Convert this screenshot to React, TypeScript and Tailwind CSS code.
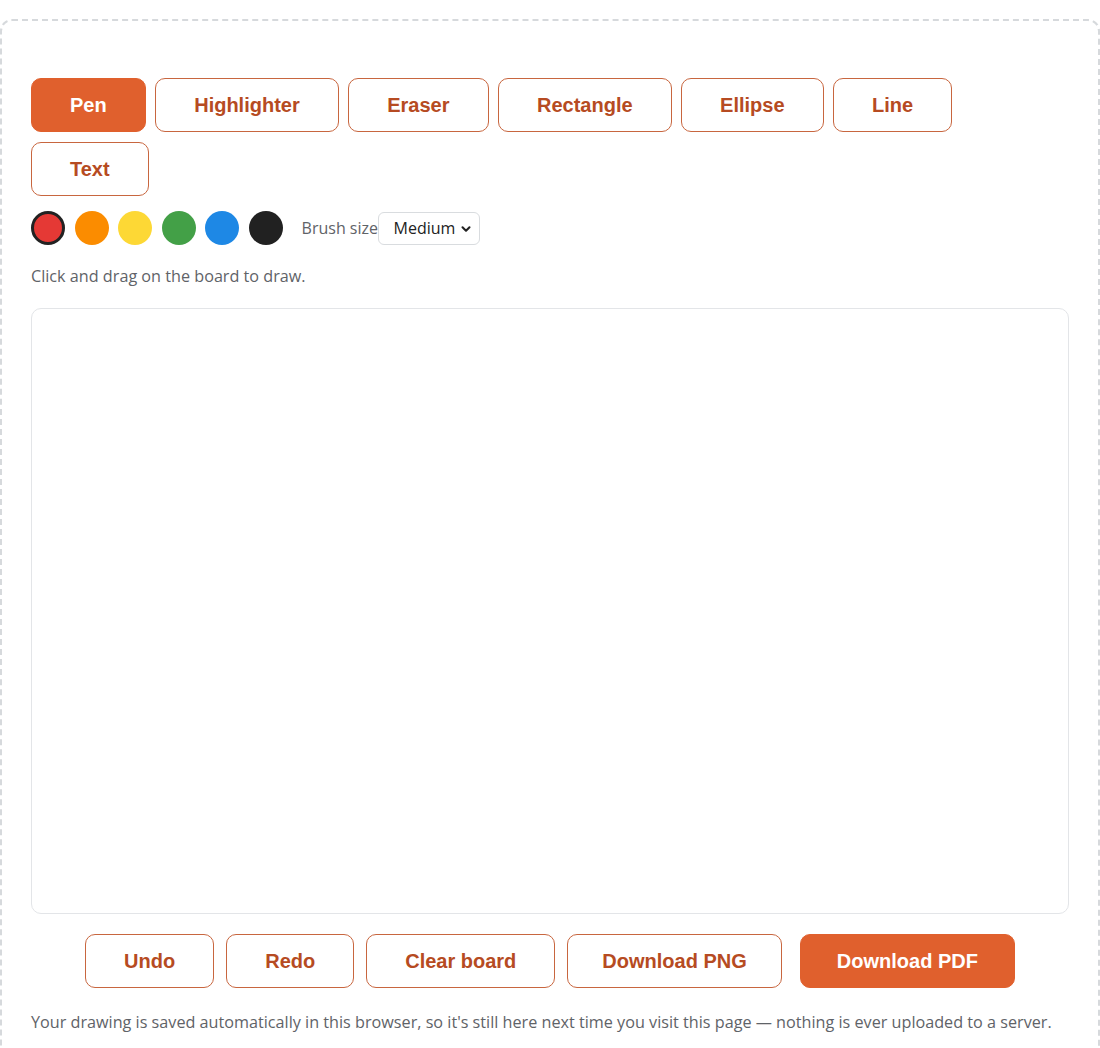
import React, { useState } from 'react';
import { ChevronDown } from 'lucide-react';

const TOOLS = ['Pen', 'Highlighter', 'Eraser', 'Rectangle', 'Ellipse', 'Line', 'Text'];

const COLORS = [
    { id: 'red', cls: 'bg-[#e53935]' },
    { id: 'orange', cls: 'bg-[#fb8c00]' },
    { id: 'yellow', cls: 'bg-[#fdd835]' },
    { id: 'green', cls: 'bg-[#43a047]' },
    { id: 'blue', cls: 'bg-[#1e88e5]' },
    { id: 'black', cls: 'bg-[#212121]' },
];

const btnBase =
    'rounded-[10px] py-[14px] text-[20px] leading-[24px] font-bold font-["Liberation_Sans",Arial,sans-serif] border';
const btnOutline = `${btnBase} bg-white border-[#c8663f] text-[#b64b22]`;
const btnFilled = `${btnBase} bg-[#e0602d] border-[#e0602d] text-white`;

export default function App() {
    const [tool, setTool] = useState('Pen');
    const [color, setColor] = useState('red');
    const [size, setSize] = useState('Medium');

    return (
        <div className="bg-white pt-[19px] font-['Open_Sans',sans-serif]">
            <div className="border-2 border-dashed border-[#d6d9dc] rounded-xl px-[29px] pt-[57px] pb-6">
                <div className="flex flex-wrap gap-x-[9.5px] gap-y-[10px]">
                    {TOOLS.map((t) => (
                        <button
                            key={t}
                            onClick={() => setTool(t)}
                            className={`${tool === t ? btnFilled : btnOutline} px-[38px]`}
                        >
                            {t}
                        </button>
                    ))}
                </div>

                <div className="mt-[15px] flex items-center gap-[9.6px]">
                    {COLORS.map((c) => (
                        <button
                            key={c.id}
                            onClick={() => setColor(c.id)}
                            className={`w-[34px] h-[34px] rounded-full ${c.cls} ${color === c.id ? 'border-[3px] border-[#222]' : ''}`}
                            aria-label={c.id}
                        />
                    ))}
                    <span className="ml-[9px] text-[16px] text-[#5f6368]">Brush size</span>
                    <div className="relative -ml-[10px]">
                        <select
                            value={size}
                            onChange={(e) => setSize(e.target.value)}
                            className="appearance-none w-[102px] h-[33px] rounded-md border border-[#d9dcdf] bg-white pl-[15px] pr-[18px] text-[16px] text-[#222] font-['Open_Sans',sans-serif]"
                        >
                            <option>Small</option>
                            <option>Medium</option>
                            <option>Large</option>
                        </select>
                        <ChevronDown
                            className="pointer-events-none absolute right-[7px] top-[10px] w-[14px] h-[14px] text-[#222]"
                            strokeWidth={3.5}
                        />
                    </div>
                </div>

                <p className="mt-[19px] text-[16.2px] leading-6 text-[#5f6368]">Click and drag on the board to draw.</p>

                <div className="mt-5 h-[606px] rounded-[10px] border border-[#e3e5e8] bg-white" />

                <div className="mt-5 flex justify-center gap-3">
                    <button className={`${btnOutline} px-[38px]`}>Undo</button>
                    <button className={`${btnOutline} px-[38px]`}>Redo</button>
                    <button className={`${btnOutline} px-[38px]`}>Clear board</button>
                    <button className={`${btnOutline} px-[34px]`}>Download PNG</button>
                    <button className={`${btnFilled} px-[36px] ml-[6px]`}>Download PDF</button>
                </div>

                <p className="mt-[22px] text-[16.2px] leading-6 text-[#5f6368]">
                    Your drawing is saved automatically in this browser, so it's still here next time you visit this page — nothing is ever uploaded to a server.
                </p>
            </div>
        </div>
    );
}
